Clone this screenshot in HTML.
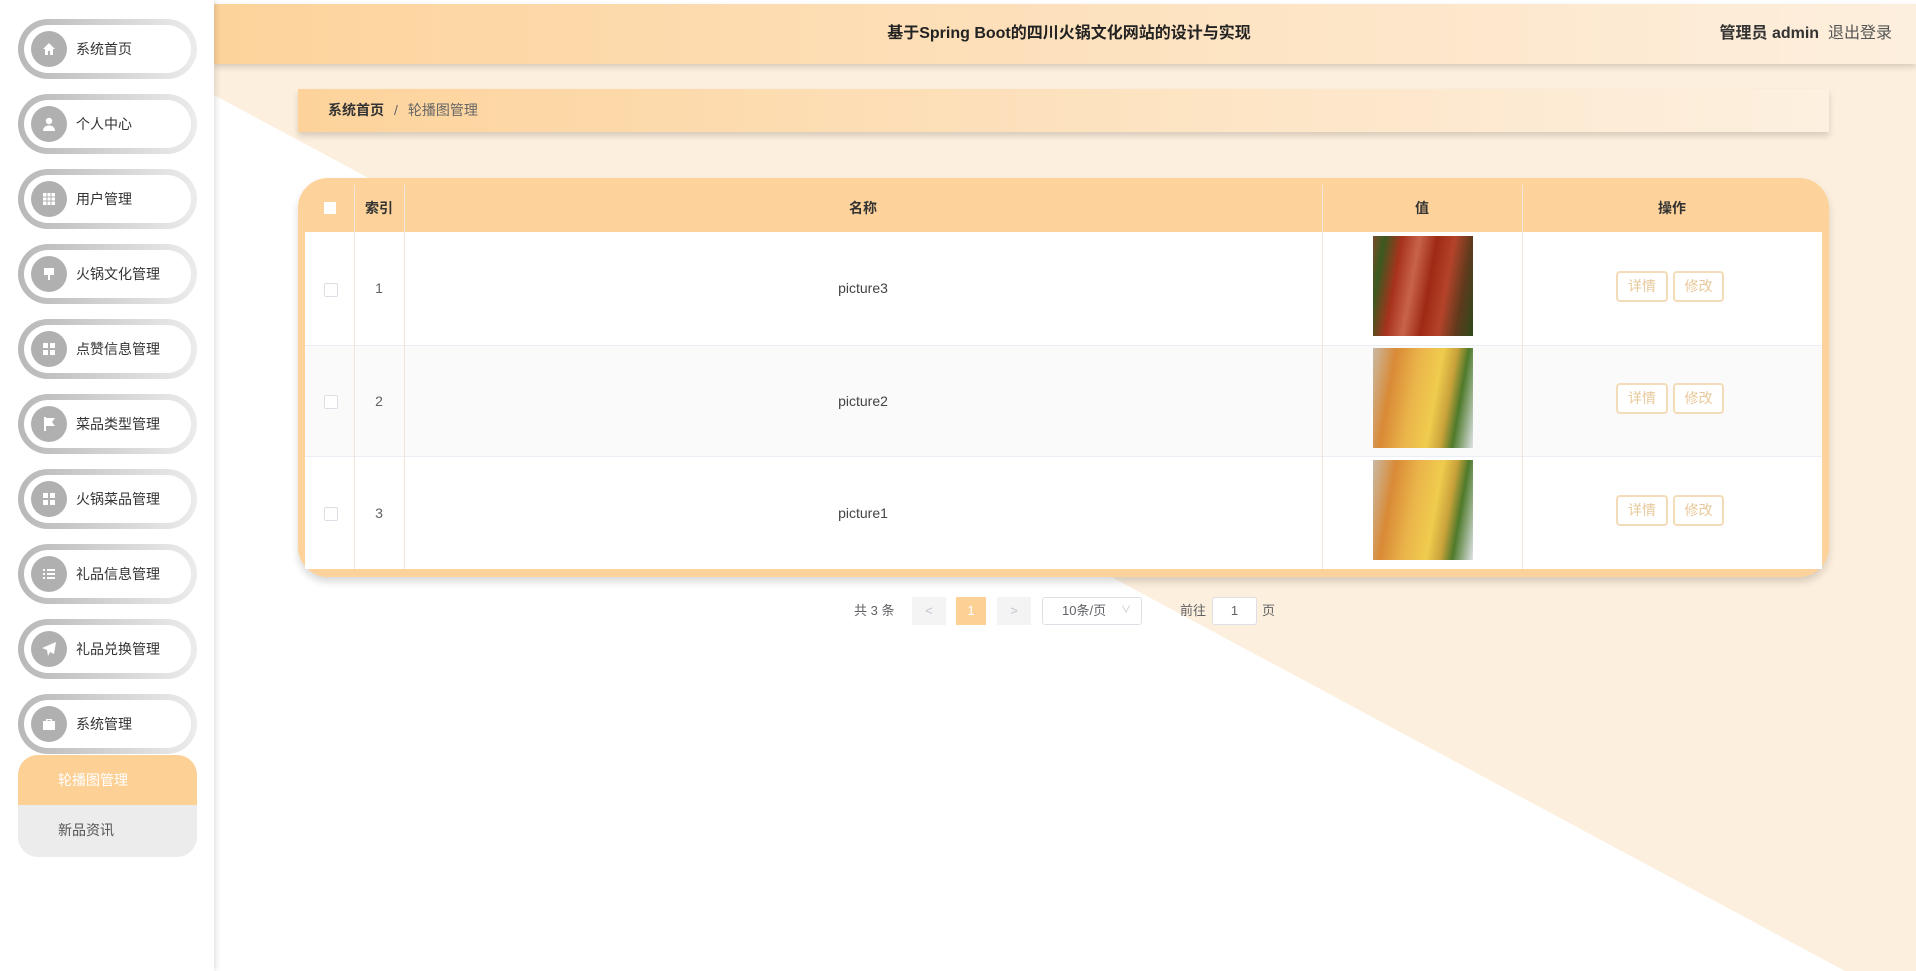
<!DOCTYPE html>
<html><head><meta charset="utf-8"><style>
*{box-sizing:border-box;margin:0;padding:0}
body{width:1916px;height:971px;overflow:hidden;position:relative;background:#fff;font-family:"Liberation Sans","Noto Sans CJK SC",sans-serif;color:#333}
.abs{position:absolute}
.side{left:0;top:0;width:214px;height:971px;background:#fff;box-shadow:2px 0 6px rgba(0,0,0,.12);z-index:2}
.pill{position:absolute;left:18px;width:179px;height:60px;border-radius:30px;background:linear-gradient(90deg,#b8b8b8,#ececec);padding:6px}
.pill .in{width:100%;height:100%;border-radius:24px;background:#fff;position:relative}
.pill .ic{position:absolute;left:7px;top:6px;width:36px;height:36px;border-radius:50%;background:#b0b0b0}
.pill .ic svg{position:absolute;left:10px;top:10px}
.pill .tx{position:absolute;left:52px;top:0;line-height:48px;font-size:14px;color:#333}
.header{left:214px;top:4px;width:1702px;height:60px;background:linear-gradient(90deg,#fdd39b,#fdefde);box-shadow:0 3px 6px rgba(0,0,0,.15);z-index:1}
</style></head><body>
<svg class="abs" style="left:0;top:0" width="1916" height="971"><polygon points="214,95 1916,95 1916,971 1845,971" fill="#fdefdd"/><polygon points="214,60 1916,60 1916,95 214,95" fill="#fdefdd"/></svg>
<div class="abs header">
 <div class="abs" style="left:0;width:1710px;top:0;line-height:60px;text-align:center;font-size:16px;font-weight:bold;color:#222">基于Spring Boot的四川火锅文化网站的设计与实现</div>
 <div class="abs" style="right:24px;top:0;line-height:60px;font-size:16px"><b style="color:#333">管理员 admin</b>&nbsp; <span style="color:#555">退出登录</span></div>
</div>
<div class="abs side">
 <div class="pill" style="top:19px"><div class="in"><div class="ic"><svg width="16" height="16"><path d="M8 2L2 8h2v6h3v-4h2v4h3V8h2z" fill="#fff"/></svg></div><div class="tx">系统首页</div></div></div>
 <div class="pill" style="top:94px"><div class="in"><div class="ic"><svg width="16" height="16"><circle cx="8" cy="5" r="3.2" fill="#fff"/><path d="M2 15c0-4 3-5.5 6-5.5s6 1.5 6 5.5z" fill="#fff"/></svg></div><div class="tx">个人中心</div></div></div>
 <div class="pill" style="top:169px"><div class="in"><div class="ic"><svg width="16" height="16"><path d="M2 2h12v12H2z" fill="#fff"/><path d="M6 2v12M10 2v12M2 6h12M2 10h12" stroke="#b0b0b0"/></svg></div><div class="tx">用户管理</div></div></div>
 <div class="pill" style="top:244px"><div class="in"><div class="ic"><svg width="16" height="16"><path d="M3 2h10v7H3zM7 9h2v5H7z" fill="#fff"/></svg></div><div class="tx">火锅文化管理</div></div></div>
 <div class="pill" style="top:319px"><div class="in"><div class="ic"><svg width="16" height="16"><path d="M2 2h5v5H2zM9 2h5v5H9zM2 9h5v5H2zM9 9h5v5H9z" fill="#fff"/></svg></div><div class="tx">点赞信息管理</div></div></div>
 <div class="pill" style="top:394px"><div class="in"><div class="ic"><svg width="16" height="16"><path d="M3 1h2v14H3zM5 2h9l-3 4 3 4H5z" fill="#fff"/></svg></div><div class="tx">菜品类型管理</div></div></div>
 <div class="pill" style="top:469px"><div class="in"><div class="ic"><svg width="16" height="16"><path d="M2 2h5v5H2zM9 2h5v5H9zM2 9h5v5H2zM9 9h5v5H9z" fill="#fff"/></svg></div><div class="tx">火锅菜品管理</div></div></div>
 <div class="pill" style="top:544px"><div class="in"><div class="ic"><svg width="16" height="16"><path d="M2 3h2v2H2zM6 3h8v2H6zM2 7h2v2H2zM6 7h8v2H6zM2 11h2v2H2zM6 11h8v2H6z" fill="#fff"/></svg></div><div class="tx">礼品信息管理</div></div></div>
 <div class="pill" style="top:619px"><div class="in"><div class="ic"><svg width="16" height="16"><path d="M15 1L1 7l5 2 1 6 2-4 4 2z" fill="#fff"/></svg></div><div class="tx">礼品兑换管理</div></div></div>
 <div class="pill" style="top:694px"><div class="in"><div class="ic"><svg width="16" height="16"><path d="M5 3h6v2h3v9H2V5h3zM6.5 4v1h3V4z" fill="#fff"/></svg></div><div class="tx">系统管理</div></div></div>
 <div class="abs" style="left:18px;top:755px;width:179px;height:102px;border-radius:20px;overflow:hidden;background:#ececec">
  <div style="height:50px;background:#fdd096;color:#fff;font-size:14px;line-height:50px;padding-left:40px">轮播图管理</div>
  <div style="height:52px;color:#555;font-size:14px;line-height:50px;padding-left:40px">新品资讯</div>
 </div>
</div>
<div class="abs" style="left:298px;top:89px;width:1531px;height:43px;background:linear-gradient(90deg,#fdd39b,#fdf0e0);box-shadow:0 4px 6px rgba(0,0,0,.15);font-size:14px;line-height:43px;padding-left:30px"><b style="color:#333">系统首页</b><span style="color:#666;margin:0 10px">/</span><span style="color:#666">轮播图管理</span></div>
<div class="abs" style="left:298px;top:178px;width:1531px;height:399px;background:#fdd39b;border-radius:30px;box-shadow:0 5px 8px rgba(0,0,0,.15)"></div>
<div class="abs" style="left:305px;top:185px;width:1517px;height:384px;overflow:hidden;border-radius:24px 24px 0 0">
 <div class="abs" style="left:0;top:0;width:1517px;height:47px;background:#fdd39b"></div>
 <div class="abs" style="left:0;top:47px;width:1517px;height:113px;background:#fff"></div>
 <div class="abs" style="left:0;top:160px;width:1517px;height:112px;background:#fafafa;border-top:1px solid #ebeef5;border-bottom:1px solid #ebeef5"></div>
 <div class="abs" style="left:0;top:272px;width:1517px;height:112px;background:#fff"></div>
 <div class="abs" style="left:49px;top:0;width:1px;height:384px;background:#f0e5d8"></div>
 <div class="abs" style="left:99px;top:0;width:1px;height:384px;background:#f0e5d8"></div>
 <div class="abs" style="left:1017px;top:0;width:1px;height:384px;background:#f0e5d8"></div>
 <div class="abs" style="left:1217px;top:0;width:1px;height:384px;background:#f0e5d8"></div>
 <div class="abs" style="left:19px;top:17px;width:12px;height:12px;background:#fff"></div>
 <div class="abs" style="left:49px;width:50px;top:0;line-height:47px;text-align:center;font-size:14px;font-weight:bold">索引</div>
 <div class="abs" style="left:99px;width:918px;top:0;line-height:47px;text-align:center;font-size:14px;font-weight:bold">名称</div>
 <div class="abs" style="left:1017px;width:200px;top:0;line-height:47px;text-align:center;font-size:14px;font-weight:bold">值</div>
 <div class="abs" style="left:1217px;width:300px;top:0;line-height:47px;text-align:center;font-size:14px;font-weight:bold">操作</div>
 <div class="abs" style="left:19px;top:98px;width:14px;height:14px;border:1px solid #dcdfe6;border-radius:2px;background:#fff"></div>
 <div class="abs" style="left:19px;top:210px;width:14px;height:14px;border:1px solid #dcdfe6;border-radius:2px;background:#fff"></div>
 <div class="abs" style="left:19px;top:322px;width:14px;height:14px;border:1px solid #dcdfe6;border-radius:2px;background:#fff"></div>
 <div class="abs" style="left:49px;width:50px;top:47px;line-height:113px;text-align:center;font-size:14px;color:#606266">1</div>
 <div class="abs" style="left:49px;width:50px;top:160px;line-height:112px;text-align:center;font-size:14px;color:#606266">2</div>
 <div class="abs" style="left:49px;width:50px;top:272px;line-height:112px;text-align:center;font-size:14px;color:#606266">3</div>
 <div class="abs" style="left:99px;width:918px;top:47px;line-height:113px;text-align:center;font-size:14px;color:#444">picture3</div>
 <div class="abs" style="left:99px;width:918px;top:160px;line-height:112px;text-align:center;font-size:14px;color:#444">picture2</div>
 <div class="abs" style="left:99px;width:918px;top:272px;line-height:112px;text-align:center;font-size:14px;color:#444">picture1</div>
 <div class="abs" style="left:1068px;top:51px;width:100px;height:100px;background:linear-gradient(100deg,#7a4a2a 0%,#3a5a20 10%,#a8321c 25%,#c8644a 40%,#9e2a14 55%,#b4432a 70%,#5e3a1c 85%,#2e4a1a 100%)"></div>
 <div class="abs" style="left:1068px;top:163px;width:100px;height:100px;background:linear-gradient(100deg,#c9b9a4 0%,#d98a36 20%,#eab34a 40%,#f0cc4e 60%,#c9a23a 72%,#4e7a2a 82%,#dfe3e6 100%)"></div>
 <div class="abs" style="left:1068px;top:275px;width:100px;height:100px;background:linear-gradient(100deg,#c9b9a4 0%,#d98a36 20%,#eab34a 40%,#f0cc4e 60%,#c9a23a 72%,#4e7a2a 82%,#dfe3e6 100%)"></div>
 <div class="abs" style="left:1311px;top:86px;width:52px;height:31px;border:2px solid #f5dcb8;border-radius:4px;background:#fff;color:#e8c89a;font-size:14px;line-height:27px;text-align:center">详情</div>
 <div class="abs" style="left:1368px;top:86px;width:51px;height:31px;border:2px solid #f5dcb8;border-radius:4px;background:#fff;color:#e8c89a;font-size:14px;line-height:27px;text-align:center">修改</div>
 <div class="abs" style="left:1311px;top:198px;width:52px;height:31px;border:2px solid #f5dcb8;border-radius:4px;background:#fff;color:#e8c89a;font-size:14px;line-height:27px;text-align:center">详情</div>
 <div class="abs" style="left:1368px;top:198px;width:51px;height:31px;border:2px solid #f5dcb8;border-radius:4px;background:#fff;color:#e8c89a;font-size:14px;line-height:27px;text-align:center">修改</div>
 <div class="abs" style="left:1311px;top:310px;width:52px;height:31px;border:2px solid #f5dcb8;border-radius:4px;background:#fff;color:#e8c89a;font-size:14px;line-height:27px;text-align:center">详情</div>
 <div class="abs" style="left:1368px;top:310px;width:51px;height:31px;border:2px solid #f5dcb8;border-radius:4px;background:#fff;color:#e8c89a;font-size:14px;line-height:27px;text-align:center">修改</div>
</div>
<div class="abs" style="left:854px;top:597px;line-height:28px;font-size:13px;color:#606266">共 3 条</div>
<div class="abs" style="left:912px;top:597px;width:34px;height:28px;background:#f4f4f5;color:#c0c4cc;text-align:center;line-height:28px;font-size:13px">&lt;</div>
<div class="abs" style="left:956px;top:597px;width:30px;height:28px;background:#fdd096;color:#fff;text-align:center;line-height:28px;font-size:13px">1</div>
<div class="abs" style="left:997px;top:597px;width:34px;height:28px;background:#f4f4f5;color:#c0c4cc;text-align:center;line-height:28px;font-size:13px">&gt;</div>
<div class="abs" style="left:1042px;top:597px;width:100px;height:28px;border:1px solid #dcdfe6;border-radius:3px;background:#fff;font-size:13px;line-height:26px;color:#606266;padding-left:19px">10条/页<span style="position:absolute;right:10px;color:#c0c4cc;font-size:10px">∨</span></div>
<div class="abs" style="left:1180px;top:597px;line-height:28px;font-size:13px;color:#606266">前往</div>
<div class="abs" style="left:1212px;top:597px;width:45px;height:28px;border:1px solid #dcdfe6;border-radius:3px;background:#fff;text-align:center;line-height:26px;font-size:13px;color:#606266">1</div>
<div class="abs" style="left:1262px;top:597px;line-height:28px;font-size:13px;color:#606266">页</div>
</body></html>
